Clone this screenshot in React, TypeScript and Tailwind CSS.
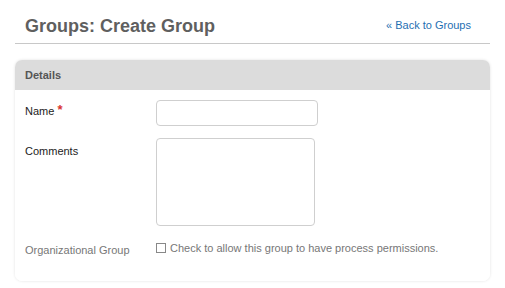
export default function App() {
  return (
    <div className="w-[505px] h-[288px] bg-white font-['Liberation_Sans',Arial,sans-serif] overflow-hidden">
      <div className="mx-[15px] flex items-end justify-between border-b border-[#c8c8c8] pl-[10px] pr-[19px] pb-[6px] pt-[15px]">
        <h1 className="text-[18px] font-bold leading-[22px] text-[#5f5f5f]">Groups: Create Group</h1>
        <a href="#" className="mb-[5px] text-[11px] leading-[14px] text-[#1f6fb2]">
          « Back to Groups
        </a>
      </div>

      <div className="mx-[15px] mt-[16px] rounded-[7px] shadow-[0_0_3px_rgba(0,0,0,0.12)]">
        <div className="h-[30px] flex items-center rounded-t-[7px] bg-[#dcdcdc] pl-[10px] text-[11px] font-bold text-[#555]">
          Details
        </div>
        <div className="rounded-b-[7px] bg-white pl-[10px] pt-[10px] pb-[22px] text-[11px]">
          <div className="flex">
            <div className="w-[131px] pt-[3px] text-[#222]">
              Name <span className="text-[#d9332f] align-top text-[13px] font-bold leading-none">*</span>
            </div>
            <input className="w-[162px] h-[26px] rounded-[4px] border border-[#cfcfcf] outline-none" />
          </div>
          <div className="mt-[12px] flex">
            <div className="w-[131px] pt-[5px] text-[#222]">Comments</div>
            <textarea className="w-[159px] h-[88px] resize-none rounded-[4px] border border-[#cfcfcf] outline-none" />
          </div>
          <div className="mt-[14px] flex items-start">
            <div className="w-[131px] pt-[2px] text-[#777]">Organizational Group</div>
            <label className="flex items-center gap-[4px] text-[#777]">
              <span className="w-[10px] h-[10px] border border-[#888] bg-white" />
              Check to allow this group to have process permissions.
            </label>
          </div>
        </div>
      </div>
    </div>
  );
}
